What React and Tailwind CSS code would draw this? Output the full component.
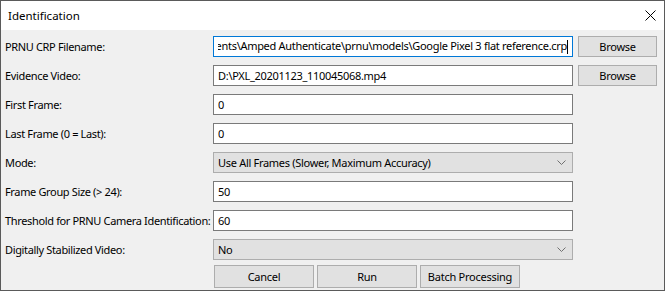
import React from "react";

const font = { fontFamily: '"Noto Sans", "Open Sans", sans-serif' };

function Label({ children }) {
  return (
    <div className="pl-[4px] text-[11px] tracking-[-0.35px] leading-none text-[#000] whitespace-nowrap">
      {children}
    </div>
  );
}

function TextBox({ children, active }) {
  return (
    <div
      className={
        "h-[21px] bg-white border flex items-center px-[4px] text-[11px] tracking-[-0.3px] leading-none text-black overflow-hidden whitespace-nowrap " +
        (active ? "border-[#0078d7]" : "border-[#7a7a7a]")
      }
    >
      {children}
    </div>
  );
}

function Combo({ children }) {
  return (
    <div className="h-[21px] bg-[#e1e1e1] border border-[#adadad] flex items-center justify-between pl-[4px] pr-[6px] text-[11px] tracking-[-0.3px] leading-none text-black">
      <span>{children}</span>
      <svg width="9" height="5" viewBox="0 0 9 5" className="text-[#707070]">
        <path d="M0.5 0.5 L4.5 4.5 L8.5 0.5" fill="none" stroke="currentColor" strokeWidth="1" />
      </svg>
    </div>
  );
}

function Button({ children, className = "" }) {
  return (
    <div
      className={
        "bg-[#e1e1e1] border border-[#adadad] flex items-center justify-center text-[11px] tracking-[-0.25px] leading-none text-black " +
        className
      }
    >
      {children}
    </div>
  );
}

export default function App() {
  return (
    <div className="w-[665px] h-[292px] bg-white" style={font}>
      <div className="w-[665px] h-[291px] border border-[#5a5a5a] flex flex-col">
        <div className="h-[29px] bg-white flex items-center justify-between pl-[7px] pr-[8px] shrink-0">
          <span className="text-[11.5px] leading-none text-black">Identification</span>
          <svg width="11" height="11" viewBox="0 0 11 11">
            <path d="M0.5 0.5 L10.5 10.5 M10.5 0.5 L0.5 10.5" stroke="#000" strokeWidth="1" />
          </svg>
        </div>
        <div className="flex-1 bg-[#f0f0f0] pt-[6px]">
          <div className="grid grid-cols-[207px_360px_79px] gap-x-[5px] gap-y-[8px] items-center">
            <Label>PRNU CRP Filename:</Label>
            <TextBox active>
              <div className="flex-1 min-w-0 flex justify-end overflow-hidden">
                <span className="whitespace-nowrap shrink-0">
                  C:\Users\Analyst\Documents\Amped Authenticate\prnu\models\Google Pixel 3 flat reference.crp
                </span>
                <span className="w-[1px] h-[14px] bg-black shrink-0"></span>
              </div>
            </TextBox>
            <Button className="h-[21px]">Browse</Button>

            <Label>Evidence Video:</Label>
            <TextBox>D:\PXL_20201123_110045068.mp4</TextBox>
            <Button className="h-[21px]">Browse</Button>

            <Label>First Frame:</Label>
            <TextBox>0</TextBox>
            <div></div>

            <Label>Last Frame (0 = Last):</Label>
            <TextBox>0</TextBox>
            <div></div>

            <Label>Mode:</Label>
            <Combo>Use All Frames (Slower, Maximum Accuracy)</Combo>
            <div></div>

            <Label>Frame Group Size (&gt; 24):</Label>
            <TextBox>50</TextBox>
            <div></div>

            <Label>Threshold for PRNU Camera Identification:</Label>
            <TextBox>60</TextBox>
            <div></div>

            <Label>Digitally Stabilized Video:</Label>
            <Combo>No</Combo>
            <div></div>
          </div>
          <div className="flex gap-[3px] pl-[213px] mt-[5px]">
            <Button className="w-[100px] h-[23px]">Cancel</Button>
            <Button className="w-[100px] h-[23px]">Run</Button>
            <Button className="w-[100px] h-[23px]">Batch Processing</Button>
          </div>
        </div>
      </div>
    </div>
  );
}
